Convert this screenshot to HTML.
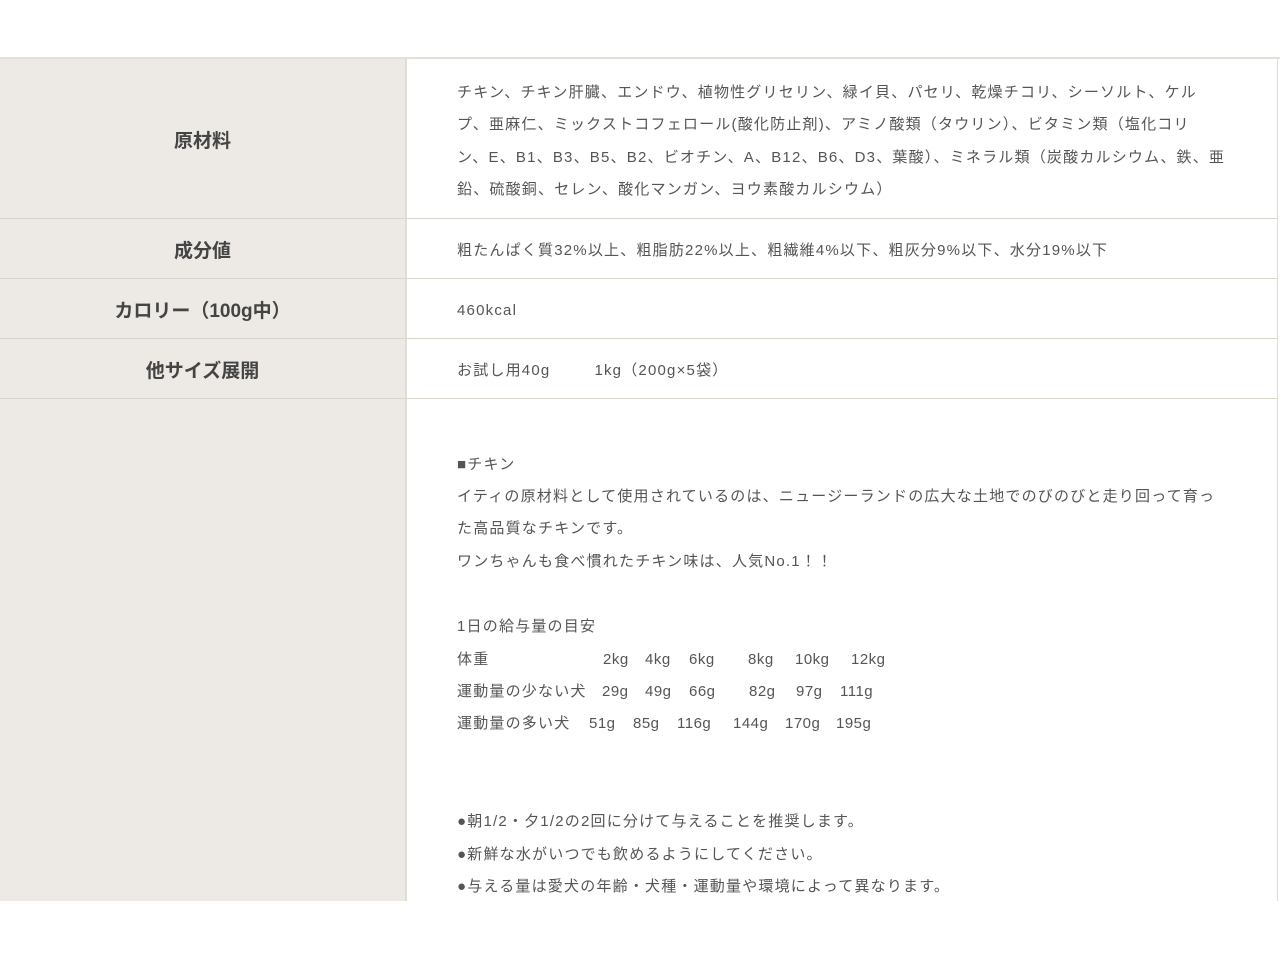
<!DOCTYPE html>
<html><head><meta charset="utf-8"><style>
*{margin:0;padding:0;box-sizing:border-box}
body{width:1280px;height:960px;background:#fff;position:relative;overflow:hidden;font-family:"Liberation Sans","Noto Sans CJK JP",sans-serif;color:#555;font-size:15px}
.l{position:absolute;left:0;width:405px;background:#edeae5;border-bottom:1px solid #d9d5cd;display:flex;align-items:center;justify-content:center;font-weight:bold;font-size:19px;color:#444;padding-top:2px}
.r{position:absolute;left:405px;width:873px;border-left:2px solid #e0ddd6;border-bottom:1px solid #d9d5cd;border-right:1px solid #e0ddd6}
.t{position:absolute;left:457px;white-space:nowrap;line-height:20px;letter-spacing:1.2px}
.s{position:absolute;white-space:nowrap;line-height:20px;letter-spacing:0.5px}
</style></head><body>
<div style="position:absolute;left:0;top:57px;width:1280px;height:2px;background:#e3e0da"></div>
<div class="l" style="top:59px;height:160px">原材料</div>
<div class="r" style="top:59px;height:160px"></div>
<div class="l" style="top:219px;height:60px">成分値</div>
<div class="r" style="top:219px;height:60px"></div>
<div class="l" style="top:279px;height:60px">カロリー（100g中）</div>
<div class="r" style="top:279px;height:60px"></div>
<div class="l" style="top:339px;height:60px">他サイズ展開</div>
<div class="r" style="top:339px;height:60px"></div>
<div class="l" style="top:399px;height:502px;border-bottom:none"></div>
<div class="r" style="top:399px;height:502px;border-bottom:none"></div>

<div class="t" style="top:83px">チキン、チキン肝臓、エンドウ、植物性グリセリン、緑イ貝、パセリ、乾燥チコリ、シーソルト、ケル</div>
<div class="t" style="top:115px">プ、亜麻仁、ミックストコフェロール(酸化防止剤)、アミノ酸類（タウリン）、ビタミン類（塩化コリ</div>
<div class="t" style="top:148px">ン、E、B1、B3、B5、B2、ビオチン、A、B12、B6、D3、葉酸）、ミネラル類（炭酸カルシウム、鉄、亜</div>
<div class="t" style="top:180px">鉛、硫酸銅、セレン、酸化マンガン、ヨウ素酸カルシウム）</div>
<div class="t" style="top:241px">粗たんぱく質32%以上、粗脂肪22%以上、粗繊維4%以下、粗灰分9%以下、水分19%以下</div>
<div class="t" style="top:301px">460kcal</div>
<div class="t" style="top:361px">お試し用40g<span style="display:inline-block;width:44px"></span>1kg（200g×5袋）</div>

<div class="t" style="top:455px">■チキン</div>
<div class="t" style="top:487px">イティの原材料として使用されているのは、ニュージーランドの広大な土地でのびのびと走り回って育っ</div>
<div class="t" style="top:519px">た高品質なチキンです。</div>
<div class="t" style="top:552px">ワンちゃんも食べ慣れたチキン味は、人気No.1！！</div>
<div class="t" style="top:617px">1日の給与量の目安</div>
<div class="t" style="top:650px">体重</div>
<div class="t" style="top:682px">運動量の少ない犬</div>
<div class="t" style="top:714px">運動量の多い犬</div>
<div class="s" style="top:650px;left:603px">2kg</div><div class="s" style="top:650px;left:645px">4kg</div><div class="s" style="top:650px;left:689px">6kg</div><div class="s" style="top:650px;left:748px">8kg</div><div class="s" style="top:650px;left:795px">10kg</div><div class="s" style="top:650px;left:851px">12kg</div>
<div class="s" style="top:682px;left:602px">29g</div><div class="s" style="top:682px;left:645px">49g</div><div class="s" style="top:682px;left:689px">66g</div><div class="s" style="top:682px;left:749px">82g</div><div class="s" style="top:682px;left:796px">97g</div><div class="s" style="top:682px;left:840px">111g</div>
<div class="s" style="top:714px;left:589px">51g</div><div class="s" style="top:714px;left:633px">85g</div><div class="s" style="top:714px;left:677px">116g</div><div class="s" style="top:714px;left:733px">144g</div><div class="s" style="top:714px;left:785px">170g</div><div class="s" style="top:714px;left:836px">195g</div>
<div class="t" style="top:812px">●朝1/2・夕1/2の2回に分けて与えることを推奨します。</div>
<div class="t" style="top:845px">●新鮮な水がいつでも飲めるようにしてください。</div>
<div class="t" style="top:877px">●与える量は愛犬の年齢・犬種・運動量や環境によって異なります。</div>
<div style="position:absolute;left:0;top:901px;width:1280px;height:59px;background:#fff"></div>
</body></html>
